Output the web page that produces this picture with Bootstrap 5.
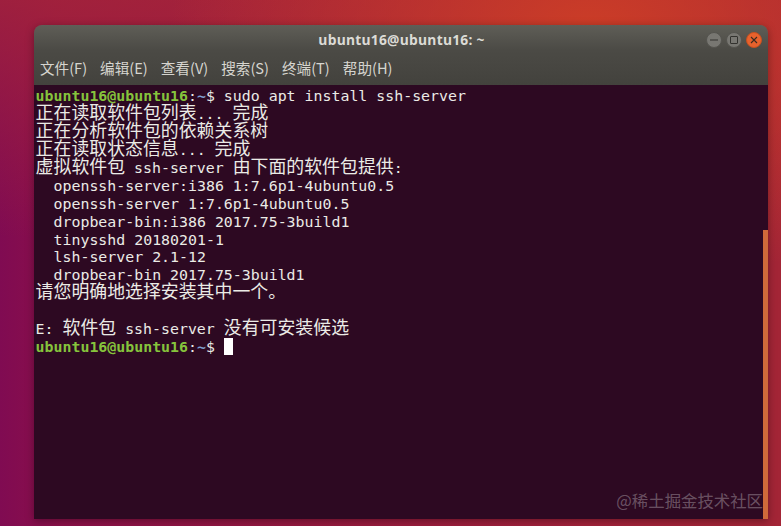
<!DOCTYPE html>
<html lang="zh-CN">
<head>
<meta charset="utf-8">
<title>ubuntu16@ubuntu16: ~</title>
<link href="https://cdn.jsdelivr.net/npm/bootstrap@5.3.0/dist/css/bootstrap.min.css" rel="stylesheet">
<style>
html,body{height:100%;margin:0;overflow:hidden}
.desk{width:781px;height:526px;padding:25px 13px 7px 34px;
 background:
  radial-gradient(ellipse 420px 260px at 590px 30px,rgba(205,62,38,.95),rgba(205,62,38,0) 100%),
  linear-gradient(180deg,rgba(168,38,56,.75) 0,rgba(168,38,56,0) 45%),
  linear-gradient(90deg,#800b52 0,#8c1049 8%,#96193f 40%,#a3223a 75%,#a32536 100%);}
.win{height:494px;border-radius:8px 8px 0 0;overflow:hidden;position:relative;box-shadow:0 2px 8px rgba(0,0,0,.35)}
.head{height:60px;background:linear-gradient(180deg,#5f5e57 0,#4b4a45 42%,#43423d 100%)}
.ttl{height:30px;padding-left:1px;font-family:"Open Sans","Noto Sans",sans-serif;font-weight:700;font-size:13.8px;color:#dcdbd6;letter-spacing:.25px;padding-top:1px}
.ctl{right:6px;top:7px}
.wbtn{width:16px;height:16px;border-radius:50%;background:#787772;border:1px solid #55544f}
.wbtn.shut{background:#e8622d;border-color:#c7501f}
.menus{height:30px;padding:2px 0 0 6px;gap:13px;font:14.6px "Noto Sans CJK SC","Noto Sans",sans-serif;color:#d6d5cf}
.term{height:434px;background:#2d0922;padding:2px 0 0 1.6px;font-family:"DejaVu Sans Mono",monospace;font-size:14.9px;color:#ebebe6}
.ln{display:block;height:17.95px;line-height:18px;white-space:pre}
.zh{font-family:"Noto Sans CJK SC",sans-serif;font-size:17.9px;line-height:0;font-weight:400}
.gr{font-weight:700;color:#86c43c}
.bl{color:#7f9fcf;font-weight:700}
.cur{display:inline-block;width:9px;height:17px;background:#fff;vertical-align:-3px}
.scroll{right:0;top:205px;bottom:0;width:5px;background:#cf6a3a}
.wm{right:5px;bottom:7px;font:16.4px "Noto Sans CJK SC",sans-serif;color:rgba(255,255,255,.3)}
</style>
</head>
<body>
<div class="desk">
 <div class="win">
  <div class="head">
   <div class="ttl d-flex align-items-center justify-content-center">ubuntu16@ubuntu16: ~</div>
   <div class="ctl position-absolute d-flex gap-1">
    <span class="wbtn d-flex align-items-center justify-content-center"><svg width="10" height="10" viewBox="0 0 10 10"><path d="M1 5h8" stroke="#33322f" stroke-width="1"/></svg></span>
    <span class="wbtn d-flex align-items-center justify-content-center"><svg width="10" height="10" viewBox="0 0 10 10"><rect x="1.5" y="1.5" width="7" height="7" rx=".5" fill="none" stroke="#33322f"/></svg></span>
    <span class="wbtn shut d-flex align-items-center justify-content-center"><svg width="10" height="10" viewBox="0 0 10 10"><path d="M2 2l6 6M8 2l-6 6" stroke="#3a2a20" stroke-width="1.1"/></svg></span>
   </div>
   <div class="menus d-flex">
    <span>文件(F)</span><span>编辑(E)</span><span>查看(V)</span><span>搜索(S)</span><span>终端(T)</span><span>帮助(H)</span>
   </div>
  </div>
  <div class="term">
<span class="ln"><span class="gr">ubuntu16@ubuntu16</span>:<span class="bl">~</span>$ sudo apt install ssh-server</span>
<span class="ln"><span class="zh">正在读取软件包列表</span>... <span class="zh">完成</span></span>
<span class="ln"><span class="zh">正在分析软件包的依赖关系树</span></span>
<span class="ln"><span class="zh">正在读取状态信息</span>... <span class="zh">完成</span></span>
<span class="ln"><span class="zh">虚拟软件包</span> ssh-server <span class="zh">由下面的软件包提供</span>:</span>
<span class="ln">  openssh-server:i386 1:7.6p1-4ubuntu0.5</span>
<span class="ln">  openssh-server 1:7.6p1-4ubuntu0.5</span>
<span class="ln">  dropbear-bin:i386 2017.75-3build1</span>
<span class="ln">  tinysshd 20180201-1</span>
<span class="ln">  lsh-server 2.1-12</span>
<span class="ln">  dropbear-bin 2017.75-3build1</span>
<span class="ln"><span class="zh">请您明确地选择安装其中一个。</span></span>
<span class="ln"> </span>
<span class="ln">E: <span class="zh">软件包</span> ssh-server <span class="zh">没有可安装候选</span></span>
<span class="ln"><span class="gr">ubuntu16@ubuntu16</span>:<span class="bl">~</span>$ <span class="cur"></span></span>
  </div>
  <div class="scroll position-absolute"></div>
  <div class="wm position-absolute">@稀土掘金技术社区</div>
 </div>
</div>
</body>
</html>
